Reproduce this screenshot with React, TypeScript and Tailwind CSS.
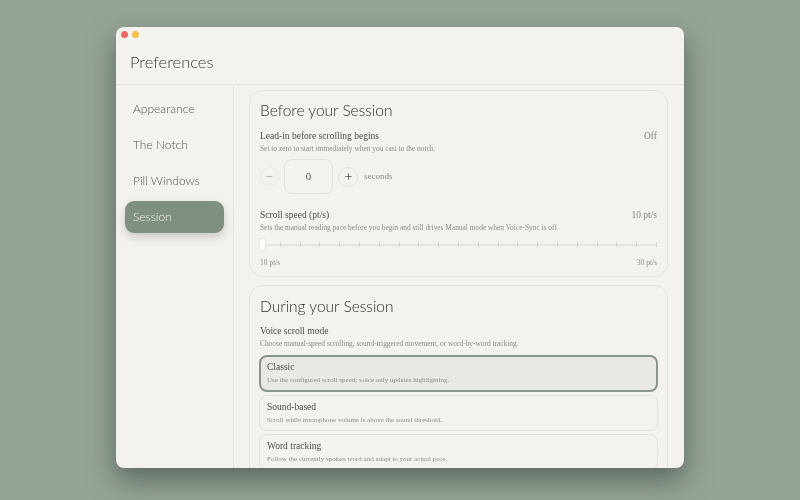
import { Minus, Plus } from "lucide-react";

const hand = "font-['Lato',cursive] font-light";
const serif = "font-['Liberation_Serif',serif]";

const navItems = ["Appearance", "The Notch", "Pill Windows", "Session"];

const modes = [
  { title: "Classic", desc: "Use the configured scroll speed; voice only updates highlighting.", active: true },
  { title: "Sound-based", desc: "Scroll while microphone volume is above the sound threshold.", active: false },
  { title: "Word tracking", desc: "Follow the currently spoken word and adapt to your actual pace.", active: false },
];

const ticks = Array.from({ length: 21 }, (_, i) => i);

const Sidebar = () => (
  <aside className="w-[118px] shrink-0 border-r border-[#e4e3db] pl-[9px] pr-[9px] pt-[8px] flex flex-col gap-1">
    {navItems.map((item) => (
      <div
        key={item}
        className={`h-8 pl-2 flex items-center rounded-[9px] text-[12px] ${hand} ${
          item === "Session" ? "bg-[#7f8f82] text-[#f4f2ed] shadow-[0_4px_10px_rgba(70,85,72,0.25)]" : "text-[#55564f]"
        }`}
      >
        {item}
      </div>
    ))}
  </aside>
);

const Stepper = () => (
  <div className="flex items-center mt-[4px]">
    <div className="w-[19px] h-[19px] rounded-full border border-[#e9e8e1] flex items-center justify-center text-[#8c8c84]">
      <Minus size={9} strokeWidth={1.5} />
    </div>
    <div className={`ml-[5px] w-[49px] h-[35px] rounded-[8px] border border-[#e3e2da] flex items-center justify-center text-[11px] text-[#55564f] ${serif}`}>
      0
    </div>
    <div className="ml-[5px] w-[20px] h-[20px] rounded-full border border-[#e3e2da] flex items-center justify-center text-[#45463f]">
      <Plus size={9} strokeWidth={2} />
    </div>
    <span className={`ml-[6px] text-[9px] text-[#8c8c84] ${serif}`}>seconds</span>
  </div>
);

const Slider = () => (
  <div className="relative mt-[5px] h-[11px] flex items-center">
    <div className="w-full h-[2px] bg-[#e7e6de]" />
    <div className="absolute inset-0 flex items-center justify-between">
      {ticks.map((t) => (
        <div key={t} className="w-px h-[5px] bg-[#d3d2ca]" />
      ))}
    </div>
    <div className="absolute left-0 top-0 w-[5px] h-[11px] rounded-[2px] bg-white shadow-[0_0_2px_rgba(0,0,0,0.2)]" />
  </div>
);

export default function App() {
  return (
    <div className="w-[800px] h-[500px] bg-[#95a497] pt-[27px] pl-[116px] overflow-hidden">
      <div className="w-[568px] h-[441px] bg-[#f4f2ed] rounded-[8px] overflow-hidden flex flex-col transform-gpu shadow-[0_12px_28px_rgba(40,55,45,0.55)]">
        <header className="h-[58px] shrink-0 border-b border-[#e4e3db] relative">
          <div className="flex gap-1 pl-[5px] pt-1">
            <div className="w-[7px] h-[7px] rounded-full bg-[#ec6a5e]" />
            <div className="w-[7px] h-[7px] rounded-full bg-[#f4bf4f]" />
          </div>
          <h1 className={`ml-[14px] mt-[12px] text-[16.5px] leading-[24px] text-[#3b3c36] ${hand}`}>Preferences</h1>
        </header>

        <div className="flex flex-1 min-h-0">
          <Sidebar />
          <main className="flex-1 min-w-0 overflow-hidden pl-[15px] pr-[16px] pt-[5px] flex flex-col gap-2">
            <section className="shrink-0 h-[187px] rounded-[14px] border border-[#e4e3db] px-[10px] pt-[7px]">
              <h2 className={`text-[15.5px] leading-[24px] text-[#2f302b] ${hand}`}>Before your Session</h2>
              <div className={`mt-[7px] flex justify-between text-[9.5px] leading-[14px] text-[#4c4d46] ${serif}`}>
                <span>Lead-in before scrolling begins</span>
                <span className="text-[#85857d]">Off</span>
              </div>
              <p className={`text-[7.4px] leading-[12px] text-[#8c8c84] ${serif}`}>
                Set to zero to start immediately when you cast to the notch.
              </p>
              <Stepper />
              <div className={`mt-[14px] flex justify-between text-[9.5px] leading-[14px] text-[#4c4d46] ${serif}`}>
                <span>Scroll speed (pt/s)</span>
                <span className="text-[#85857d]">10 pt/s</span>
              </div>
              <p className={`text-[7.4px] leading-[12px] text-[#8c8c84] ${serif}`}>
                Sets the manual reading pace before you begin and still drives Manual mode when Voice-Sync is off.
              </p>
              <Slider />
              <div className={`mt-[7px] flex justify-between text-[7.5px] leading-[12px] text-[#8c8c84] ${serif}`}>
                <span>10 pt/s</span>
                <span>30 pt/s</span>
              </div>
            </section>

            <section className="shrink-0 rounded-[14px] border border-[#e4e3db] px-[10px] pt-[8px] pb-3">
              <h2 className={`text-[15.5px] leading-[24px] text-[#2f302b] ${hand}`}>During your Session</h2>
              <div className={`mt-[6px] text-[9.5px] leading-[14px] text-[#4c4d46] ${serif}`}>Voice scroll mode</div>
              <p className={`text-[7.4px] leading-[12px] text-[#8c8c84] ${serif}`}>
                Choose manual-speed scrolling, sound-triggered movement, or word-by-word tracking.
              </p>
              <div className="mt-[5px] flex flex-col gap-[3px] -mx-px">
                {modes.map((m) => (
                  <div
                    key={m.title}
                    className={`rounded-[8px] flex flex-col ${serif} ${
                      m.active
                        ? "h-[37px] border-2 border-[#8a9589] bg-[#e9e9e4] px-[6px] pt-[4px]"
                        : "h-[36px] border border-[#e3e2da] px-[7px] pt-[5px]"
                    }`}
                  >
                    <div className="text-[9.5px] leading-[13px] text-[#4c4d46]">{m.title}</div>
                    <div className="text-[7px] leading-[13px] text-[#8c8c84]">{m.desc}</div>
                  </div>
                ))}
              </div>
            </section>
          </main>
        </div>
      </div>
    </div>
  );
}
